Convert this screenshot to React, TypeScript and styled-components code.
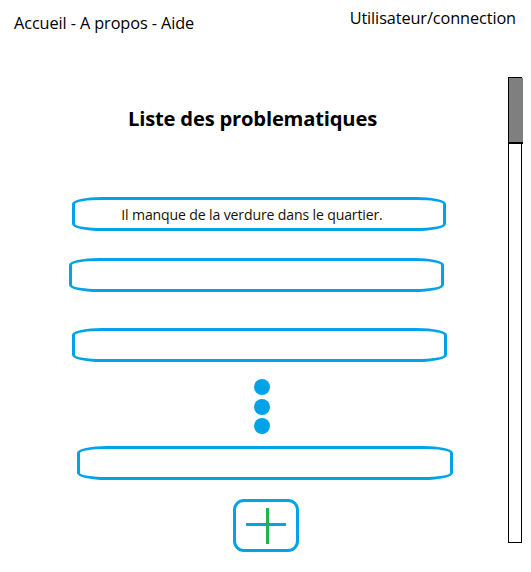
import React from "react";
import styled, { createGlobalStyle } from "styled-components";

const Global = createGlobalStyle`
  html, body { margin: 0; padding: 0; background: #ffffff; }
  body { font-family: "Open Sans", "Noto Sans", sans-serif; color: #000; }
`;

const Page = styled.div`
  width: 531px;
  height: 572px;
  display: flex;
  flex-direction: column;
  overflow: hidden;
`;

const Header = styled.header`
  display: flex;
  justify-content: space-between;
  align-items: flex-start;
  padding: 0 15px 0 14px;
  height: 40px;
`;

const NavText = styled.div<{ $top: number }>`
  margin-top: ${(p) => p.$top}px;
  font-size: 16.3px;
  line-height: 20px;
  letter-spacing: -0.1px;
  white-space: nowrap;
`;

const Body = styled.div`
  display: flex;
  flex: 1;
`;

const Main = styled.main`
  flex: 1;
  display: flex;
  flex-direction: column;
  align-items: flex-start;
`;

const Title = styled.h1`
  margin: 65px 0 0 128px;
  font-size: 20.2px;
  font-weight: 700;
  line-height: 26px;
  letter-spacing: -0.2px;
`;

const Field = styled.div<{ $left: number; $top: number; $width: number }>`
  box-sizing: border-box;
  margin: ${(p) => p.$top}px 0 0 ${(p) => p.$left}px;
  width: ${(p) => p.$width}px;
  height: 34px;
  border: 3px solid #00a2e8;
  border-radius: 30px / 7px;
  display: flex;
  align-items: center;
  justify-content: center;
  padding-right: 14px;
  font-size: 14.1px;
  letter-spacing: -0.15px;
  color: #1a1200;
`;

const Dots = styled.div`
  margin: 17px 0 0 254px;
  display: flex;
  flex-direction: column;
  gap: 3.5px;
`;

const Dot = styled.span`
  width: 16px;
  height: 16px;
  border-radius: 50%;
  background: #00a2e8;
`;

const AddButton = styled.button`
  box-sizing: border-box;
  margin: 19px 0 0 233px;
  width: 66px;
  height: 53px;
  border: 3px solid #00a2e8;
  border-radius: 11px;
  background: #fff;
  padding: 0;
  display: flex;
  align-items: center;
  justify-content: center;
  cursor: pointer;
`;

const ScrollTrack = styled.div`
  box-sizing: border-box;
  margin: 37px 9px 0 0;
  width: 14px;
  height: 466px;
  border: 1px solid #000;
  background: #fff;
`;

const ScrollThumb = styled.div`
  box-sizing: border-box;
  height: 66px;
  background: #7f7f7f;
  border-bottom: 2px solid #000;
  margin-right: -2px;
`;

export default function App() {
  return (
    <>
      <Global />
      <Page>
        <Header>
          <NavText $top={13}>Accueil - A propos - Aide</NavText>
          <NavText $top={8}>Utilisateur/connection</NavText>
        </Header>
        <Body>
          <Main>
            <Title>Liste des problematiques</Title>
            <Field $left={72} $top={66} $width={374}>
              Il manque de la verdure dans le quartier.
            </Field>
            <Field $left={69} $top={27} $width={375} />
            <Field $left={72} $top={36} $width={375} />
            <Dots>
              <Dot />
              <Dot />
              <Dot />
            </Dots>
            <Field $left={77} $top={12} $width={376} />
            <AddButton aria-label="Ajouter">
              <svg width="40" height="36" viewBox="0 0 40 36">
                <rect x="0" y="15" width="40" height="3" fill="#00a2e8" />
                <rect x="20" y="0" width="3" height="36" fill="#22b14c" />
              </svg>
            </AddButton>
          </Main>
          <ScrollTrack>
            <ScrollThumb />
          </ScrollTrack>
        </Body>
      </Page>
    </>
  );
}
